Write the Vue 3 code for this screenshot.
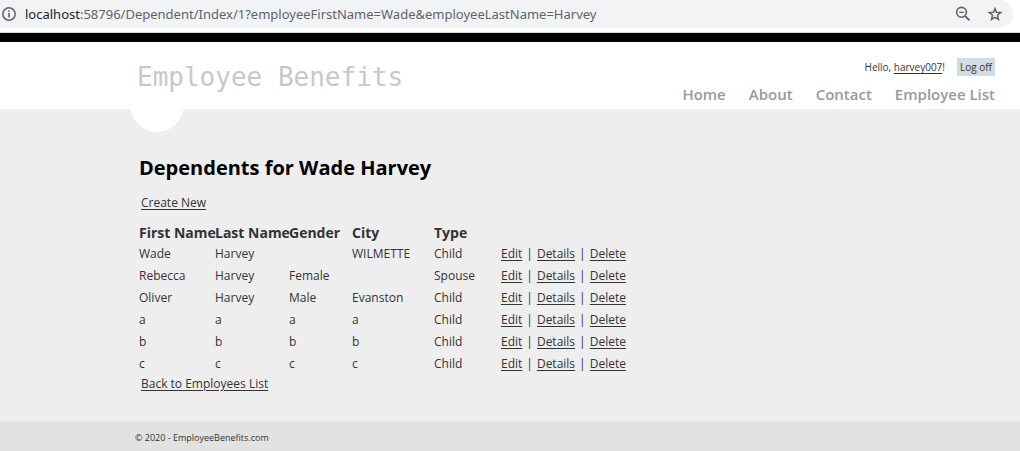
<script setup>
const nav = ['Home', 'About', 'Contact', 'Employee List']
const columns = ['First Name', 'Last Name', 'Gender', 'City', 'Type']
const dependents = [
  ['Wade', 'Harvey', '', 'WILMETTE', 'Child'],
  ['Rebecca', 'Harvey', 'Female', '', 'Spouse'],
  ['Oliver', 'Harvey', 'Male', 'Evanston', 'Child'],
  ['a', 'a', 'a', 'a', 'Child'],
  ['b', 'b', 'b', 'b', 'Child'],
  ['c', 'c', 'c', 'c', 'Child'],
]
</script>

<template>
  <div class="window">
    <div class="browser-bar">
      <div class="omnibox">
        <svg class="info" width="16" height="16" viewBox="0 0 16 16" aria-hidden="true">
          <circle cx="8" cy="8" r="6.2" fill="none" stroke="#5f6368" stroke-width="1.5" />
          <path d="M7.2 4.4h1.6v1.5H7.2zM7.2 7h1.6v4.6H7.2z" fill="#5f6368" />
        </svg>
        <div class="url"><span class="host">localhost</span>:58796/Dependent/Index/1?employeeFirstName=Wade&amp;employeeLastName=Harvey</div>
        <button class="icon-button" type="button" aria-label="Zoom">
          <svg width="16" height="16" viewBox="0 0 16 16" fill="none" stroke="#5f6368">
            <circle cx="6.5" cy="6.3" r="4.9" stroke-width="1.6" />
            <path d="M4.2 6.3h4.6" stroke-width="1.3" />
            <path d="M10 9.8l4.5 4.5" stroke-width="1.9" />
          </svg>
        </button>
        <button class="icon-button" type="button" aria-label="Bookmark this page">
          <svg width="16" height="16" viewBox="0 0 16 16" fill="none" stroke="#5f6368" stroke-width="1.5">
            <path d="M8 2.6l1.5 3.7 4.2.3-3.2 2.7 1 4.2L8 11.3l-3.5 2.2 1-4.2-3.2-2.7 4.2-.3z" />
          </svg>
        </button>
      </div>
    </div>

    <header class="site-header">
      <a class="site-title" href="#">Employee Benefits</a>
      <div class="header-right">
        <div class="login">
          <span>Hello, <a href="#">harvey007</a>!</span>
          <a class="logoff" href="#">Log off</a>
        </div>
        <nav class="menu">
          <a v-for="item in nav" :key="item" href="#">{{ item }}</a>
        </nav>
      </div>
    </header>

    <main class="content">
      <h1>Dependents for Wade Harvey</h1>
      <p class="create"><a href="#">Create New</a></p>
      <table>
        <colgroup>
          <col class="c-first" /><col class="c-last" /><col class="c-gender" />
          <col class="c-city" /><col class="c-type" /><col class="c-actions" />
        </colgroup>
        <thead>
          <tr>
            <th v-for="c in columns" :key="c" scope="col">{{ c }}</th>
            <td></td>
          </tr>
        </thead>
        <tbody>
          <tr v-for="(row, i) in dependents" :key="i">
            <td v-for="(cell, j) in row" :key="j">{{ cell }}</td>
            <td>
              <div class="actions">
                <a href="#">Edit</a><span>|</span><a href="#">Details</a><span>|</span><a href="#">Delete</a>
              </div>
            </td>
          </tr>
        </tbody>
      </table>
      <p class="back"><a href="#">Back to Employees List</a></p>
    </main>

    <footer>© 2020 - EmployeeBenefits.com</footer>
  </div>
</template>

<style>
body {
  margin: 0;
  background: #e2e2e2;
}
</style>

<style scoped>
.window {
  display: flex;
  flex-direction: column;
  min-height: 100vh;
  font-family: "Open Sans", "Noto Sans", sans-serif;
  font-size: 12px;
  color: #333;
}
a {
  color: #333;
  text-underline-offset: 2px;
}
.browser-bar {
  background: #fff;
  padding: 0 7px 4px 0;
  border-bottom: 1px solid #d5d7da;
}
.omnibox {
  display: flex;
  align-items: center;
  gap: 16px;
  height: 28px;
  padding: 0 10px 0 1px;
  background: #f1f3f4;
  border-radius: 0 14px 14px 0;
}
.url {
  flex: 1;
  margin-left: -8px;
  font-family: "Noto Sans", sans-serif;
  font-size: 13px;
  color: #5f6368;
  white-space: nowrap;
}
.host {
  color: #202124;
}
.icon-button {
  display: flex;
  padding: 0;
  border: 0;
  background: none;
}
.site-header {
  position: relative;
  display: flex;
  justify-content: space-between;
  box-sizing: border-box;
  height: 76px;
  padding: 16px 25px 0 137px;
  border-top: 9px solid #000;
  background: #fff;
}
.site-header::after {
  content: "";
  position: absolute;
  left: 130px;
  bottom: -23px;
  width: 54px;
  height: 54px;
  border-radius: 50%;
  background: #fff;
}
.site-title {
  position: relative;
  z-index: 1;
  font-family: "DejaVu Sans Mono", monospace;
  font-size: 26px;
  line-height: 38px;
  color: #c8c8c8;
  text-decoration: none;
}
.header-right {
  display: flex;
  flex-direction: column;
  align-items: flex-end;
  gap: 6px;
}
.login {
  display: flex;
  gap: 12px;
  font-size: 10px;
  line-height: 18px;
}
.logoff {
  padding: 0 3px;
  background: #d3dce0;
  text-decoration: none;
}
.menu {
  display: flex;
  gap: 23px;
  font-size: 15px;
  font-weight: 600;
  line-height: 24px;
}
.menu a {
  color: #999;
  text-decoration: none;
}
.content {
  padding: 43px 20px 28px 139px;
  background: #eee;
}
h1 {
  margin: 0;
  font-size: 20px;
  line-height: 32px;
  color: #000;
}
p {
  margin: 0;
  padding-left: 2px;
  line-height: 18px;
}
.create {
  margin: 10px 0 9px;
}
table {
  table-layout: fixed;
  width: 490px;
  border-collapse: collapse;
}
th,
td {
  padding: 0;
  height: 22px;
  line-height: 20px;
  text-align: left;
  white-space: nowrap;
}
th {
  font-size: 14px;
  vertical-align: bottom;
}
.c-first { width: 76px; }
.c-last { width: 74px; }
.c-gender { width: 63px; }
.c-city { width: 82px; }
.c-type { width: 67px; }
.c-actions { width: 128px; }
.actions {
  display: flex;
  gap: 4px;
}
footer {
  padding: 8px 20px 4px 135px;
  background: #e2e2e2;
  font-size: 9px;
  line-height: 18px;
}
</style>
